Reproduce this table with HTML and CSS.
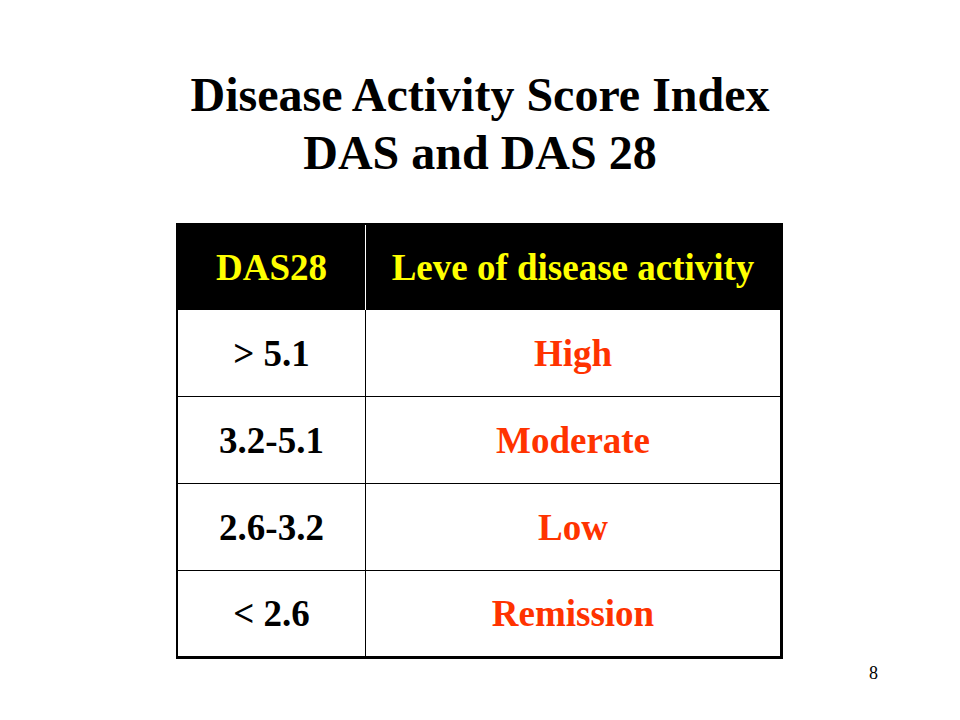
FILE: index.html
```html
<!DOCTYPE html>
<html>
<head>
<meta charset="utf-8">
<link rel="stylesheet" href="styles.css">
</head>
<body>
<div class="slide">
  <h1 class="title">Disease Activity Score Index<br>DAS and DAS 28</h1>
  <div class="table">
    <div class="row head">
      <div class="cell left">DAS28</div>
      <div class="cell right">Leve of disease activity</div>
    </div>
    <div class="row">
      <div class="cell left">&gt; 5.1</div>
      <div class="cell right level">High</div>
    </div>
    <div class="row">
      <div class="cell left">3.2-5.1</div>
      <div class="cell right level">Moderate</div>
    </div>
    <div class="row">
      <div class="cell left">2.6-3.2</div>
      <div class="cell right level">Low</div>
    </div>
    <div class="row last">
      <div class="cell left">&lt; 2.6</div>
      <div class="cell right level">Remission</div>
    </div>
  </div>
  <div class="pagenum">8</div>
</div>
</body>
</html>
```

FILE: styles.css
```css
html, body {
  margin: 0;
  padding: 0;
  background: #ffffff;
}

.slide {
  width: 960px;
  height: 720px;
  box-sizing: border-box;
  padding-top: 66px;
  display: flex;
  flex-direction: column;
  font-family: "Liberation Serif", "Times New Roman", serif;
  color: #000000;
  overflow: hidden;
}

.title {
  margin: 0;
  font-size: 48px;
  line-height: 58px;
  font-weight: bold;
  text-align: center;
}

.table {
  margin: 41px 0 0 176px;
  width: 607px;
  box-sizing: border-box;
  border-left: 2px solid #000;
  border-top: 2px solid #000;
  border-right: 3px solid #000;
  border-bottom: 3px solid #000;
  display: flex;
  flex-direction: column;
}

.row {
  display: grid;
  grid-template-columns: 188px 1fr;
  height: 86px;
  border-bottom: 1px solid #000;
}

.row.head {
  height: 85px;
  background: #000;
  border-bottom: none;
}

.row.last {
  border-bottom: none;
  height: 85px;
}

.cell {
  display: flex;
  align-items: center;
  justify-content: center;
  font-size: 37px;
  font-weight: bold;
}

.cell.left {
  border-right: 1px solid #000;
}

.head .cell {
  color: #ffff00;
}

.head .cell.left {
  border-right-color: #ffffff;
}

.level {
  color: #ff3300;
}

.pagenum {
  margin-top: 4px;
  padding-right: 82px;
  text-align: right;
  font-size: 18px;
}
```
